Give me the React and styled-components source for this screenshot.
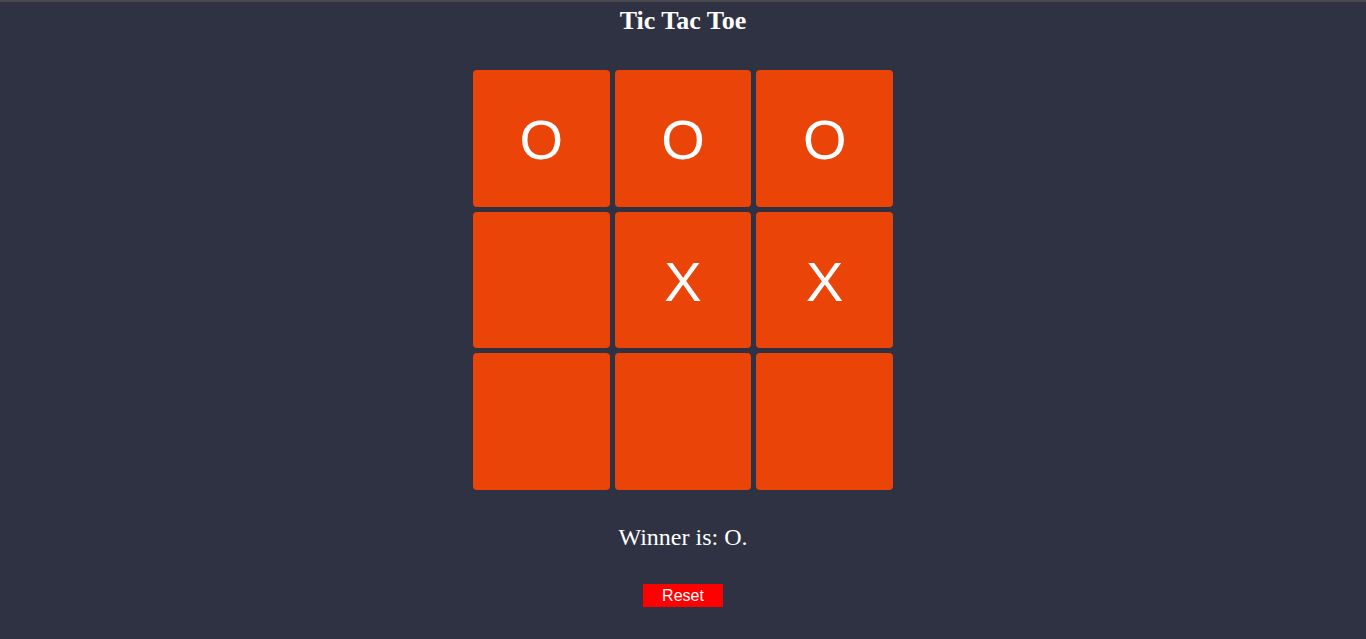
import React, { useState } from "react";
import styled, { createGlobalStyle } from "styled-components";

const Global = createGlobalStyle`
  html, body { margin: 0; padding: 0; background: #2f3243; }
  body { min-height: 639px; }
`;

const Page = styled.div`
  min-height: 639px;
  box-sizing: border-box;
  border-top: 2px solid #4b4b4f;
  background: #2f3243;
  display: flex;
  flex-direction: column;
  align-items: center;
  padding-top: 5px;
  font-family: "Liberation Serif", "Times New Roman", serif;
  color: #ffffff;
`;

const Title = styled.h1`
  margin: 0;
  font-size: 26px;
  font-weight: bold;
  line-height: 27px;
`;

const Board = styled.div`
  margin-top: 36px;
  width: 420px;
  display: grid;
  grid-template-columns: repeat(3, 1fr);
  grid-auto-rows: 136.67px;
  gap: 5px;
`;

const Cell = styled.button`
  border: none;
  padding: 0;
  margin: 0;
  border-radius: 4px;
  background: #eb4409;
  color: #ffffff;
  font-family: "Liberation Sans", Arial, sans-serif;
  font-size: 56px;
  display: flex;
  align-items: center;
  justify-content: center;
  cursor: pointer;
  padding-top: 3px;
`;

const Status = styled.p`
  margin: 34px 0 0;
  font-size: 24px;
  line-height: 27px;
`;

const ResetButton = styled.button`
  margin-top: 33px;
  width: 80px;
  height: 23px;
  border: none;
  padding: 1px 0 0;
  background: #ff0000;
  color: #ffffff;
  font-family: "Liberation Sans", Arial, sans-serif;
  font-size: 16px;
  cursor: pointer;
`;

const initial = ["O", "O", "O", "", "X", "X", "", "", ""];

export default function App() {
  const [cells, setCells] = useState(initial);
  return (
    <>
      <Global />
      <Page>
        <Title>Tic Tac Toe</Title>
        <Board>
          {cells.map((v, i) => (
            <Cell key={i}>{v}</Cell>
          ))}
        </Board>
        <Status>Winner is: O.</Status>
        <ResetButton onClick={() => setCells(Array(9).fill(""))}>Reset</ResetButton>
      </Page>
    </>
  );
}
